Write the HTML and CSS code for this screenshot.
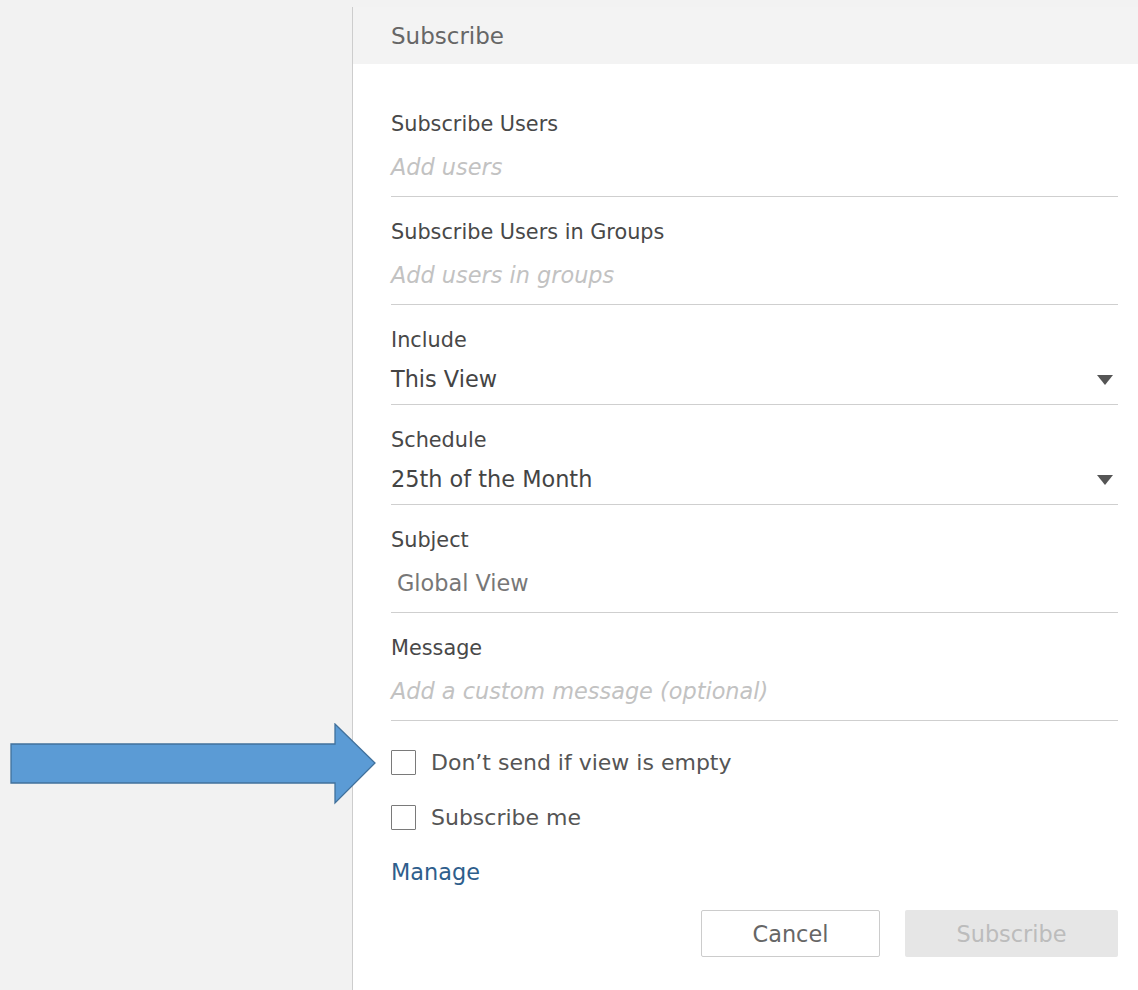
FILE: index.html
```html
<!DOCTYPE html>
<html lang="en">
<head>
<meta charset="utf-8">
<title>Subscribe</title>
<link rel="stylesheet" href="styles.css">
</head>
<body>
<div class="page">
  <div class="backdrop"></div>
  <section class="panel">
    <header class="panel-head">Subscribe</header>
    <form class="panel-body">
      <div class="field text">
        <div class="label">Subscribe Users</div>
        <div class="value placeholder">Add users</div>
      </div>
      <div class="field text">
        <div class="label">Subscribe Users in Groups</div>
        <div class="value placeholder">Add users in groups</div>
      </div>
      <div class="field select">
        <div class="label">Include</div>
        <div class="value">This View<span class="caret"></span></div>
      </div>
      <div class="field select">
        <div class="label">Schedule</div>
        <div class="value">25th of the Month<span class="caret"></span></div>
      </div>
      <div class="field text">
        <div class="label">Subject</div>
        <div class="value filled">Global View</div>
      </div>
      <div class="field text">
        <div class="label">Message</div>
        <div class="value placeholder">Add a custom message (optional)</div>
      </div>
      <div class="options">
        <label class="check"><span class="box"></span>Don’t send if view is empty</label>
        <label class="check"><span class="box"></span>Subscribe me</label>
        <a class="manage">Manage</a>
      </div>
      <div class="actions">
        <button type="button" class="btn cancel">Cancel</button>
        <button type="button" class="btn submit">Subscribe</button>
      </div>
    </form>
  </section>
</div>
<svg class="arrow" width="370" height="84" viewBox="0 0 370 84">
  <polygon points="1,21 325,21 325,1 365,40 325,80 325,60 1,60" fill="#5b9bd5" stroke="#41719c" stroke-width="1.3"/>
</svg>
</body>
</html>
```
FILE: styles.css
```css
html, body {
  margin: 0;
  padding: 0;
  background: #f2f2f2;
  font-family: "DejaVu Sans", Verdana, sans-serif;
}

.page {
  display: flex;
  min-height: 990px;
  padding-top: 7px;
  box-sizing: border-box;
}

.backdrop {
  width: 352px;
  flex: none;
}

.panel {
  flex: 1;
  background: #fff;
  border-left: 1px solid #cdcdcd;
}

.panel-head {
  height: 57px;
  background: #f3f3f3;
  padding-left: 38px;
  display: flex;
  align-items: center;
  font-size: 23px;
  color: #666;
}

.panel-body {
  padding: 48px 20px 0 38px;
}

/* form rows: label, value, underline */
.field {
  border-bottom: 1px solid #cfcfcf;
  margin-bottom: 23px;
}

.label {
  height: 24px;
  line-height: 24px;
  font-size: 20.8px;
  color: #484848;
  white-space: nowrap;
}

.value {
  position: relative;
  height: 24px;
  line-height: 24px;
  font-size: 22.4px;
  color: #444;
  white-space: nowrap;
}

.text .value {
  margin-top: 19px;
  padding-bottom: 17px;
}

.select .value {
  margin-top: 15px;
  padding-bottom: 13px;
}

.placeholder {
  color: #c2c2c2;
  font-style: italic;
}

.filled {
  color: #777;
  padding-left: 6px;
}

.caret {
  position: absolute;
  right: 5px;
  top: 8px;
  width: 0;
  height: 0;
  border-left: 8px solid transparent;
  border-right: 8px solid transparent;
  border-top: 10px solid #555;
}

/* checkboxes and link */
.options {
  display: flex;
  flex-direction: column;
  align-items: flex-start;
  gap: 31px;
  padding-top: 6px;
}

.check {
  display: flex;
  align-items: center;
  height: 24px;
  font-size: 22px;
  color: #555;
}

.box {
  width: 25px;
  height: 25px;
  box-sizing: border-box;
  border: 1.5px solid #7a7a7a;
  border-radius: 1px;
  margin-right: 15px;
  flex: none;
}

.manage {
  display: block;
  height: 24px;
  line-height: 24px;
  font-size: 22.4px;
  color: #2e5e8c;
}

.actions {
  display: flex;
  justify-content: flex-end;
  gap: 25px;
  margin-top: 26px;
}

.btn {
  height: 47px;
  font-family: "DejaVu Sans", Verdana, sans-serif;
  font-size: 22.4px;
  border-radius: 2px;
  padding: 0;
}

.cancel {
  width: 179px;
  background: #fff;
  border: 1px solid #cccccc;
  color: #666;
}

.submit {
  width: 213px;
  background: #e6e6e6;
  border: none;
  color: #bcbcbc;
}

.arrow {
  position: absolute;
  left: 10px;
  top: 723px;
}
```
